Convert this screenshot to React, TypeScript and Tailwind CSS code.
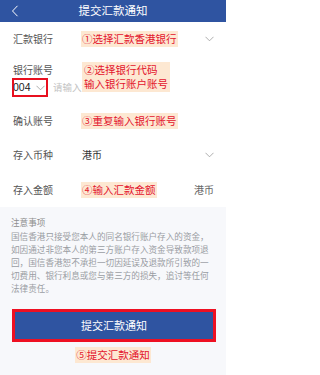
import React from 'react';

const font = { fontFamily: '"Noto Sans CJK SC", "Noto Sans", sans-serif' };

const Chevron = () => (
  <svg width="9" height="6" viewBox="0 0 9 6" className="shrink-0">
    <path d="M0.5 0.8 L4.5 4.8 L8.5 0.8" fill="none" stroke="#9a9a9a" strokeWidth="0.8" />
  </svg>
);

const Note: React.FC<{ children: React.ReactNode; className?: string }> = ({ children, className = '' }) => (
  <span className={`bg-[#fde8d2] text-[#e3132c] text-[10.5px] leading-[14px] px-[1px] py-[1px] ${className}`}>{children}</span>
);

export default function App() {
  return (
    <div className="w-[226px] h-[375px] bg-white flex flex-col overflow-hidden" style={font}>
      {/* Header */}
      <div className="h-[22px] bg-[#2f54a1] flex items-center relative shrink-0">
        <svg width="8" height="12" viewBox="0 0 8 12" className="absolute left-[11px] top-[5px]">
          <path d="M6.5 0.8 L1.5 6 L6.5 11.2" fill="none" stroke="#fff" strokeWidth="1" />
        </svg>
        <div className="w-full text-center text-white text-[11.5px] leading-none">提交汇款通知</div>
      </div>

      {/* Form */}
      <div className="flex flex-col">
        <div className="h-[33px] flex items-center pl-[13px] pr-[12px]">
          <span className="w-[68px] text-[10px] text-[#555]">汇款银行</span>
          <Note>①选择汇款香港银行</Note>
          <span className="ml-auto"><Chevron /></span>
        </div>

        <div className="h-[49px] relative flex flex-col pl-[12px] pt-[8px]">
          <span className="pl-[1px] text-[10px] leading-[14px] text-[#555]">银行账号</span>
          <div className="flex items-center mt-[1px]">
            <div className="w-[36px] h-[19px] border-2 border-[#e8101f] flex items-center gap-[5px]">
              <span className="text-[10.5px] text-[#222] leading-none -ml-[1px]" style={{ fontFamily: '"Liberation Sans", sans-serif' }}>004</span>
              <Chevron />
            </div>
            <span className="ml-[5px] w-[29px] overflow-hidden whitespace-nowrap text-[9.5px] text-[#c4c4c4]">请输入银行账号</span>
          </div>
          {/* annotation laid over the placeholder */}
          <div className="absolute left-[82px] top-[7px] bg-[#fde8d2] flex flex-col px-[2px] py-[1px]">
            <span className="text-[#e3132c] text-[10.5px] leading-[14px]">②选择银行代码</span>
            <span className="text-[#e3132c] text-[10.5px] leading-[14px]">输入银行账户账号</span>
          </div>
        </div>

        <div className="h-[33px] flex items-center pl-[13px] pr-[12px]">
          <span className="w-[68px] text-[10px] text-[#555]">确认账号</span>
          <Note>③重复输入银行账号</Note>
        </div>

        <div className="h-[35px] flex items-center pl-[13px] pr-[12px]">
          <span className="w-[69px] text-[10px] text-[#555]">存入币种</span>
          <span className="text-[10px] text-[#333]">港币</span>
          <span className="ml-auto"><Chevron /></span>
        </div>

        <div className="h-[35px] flex items-center pl-[13px] pr-[12px]">
          <span className="w-[68px] text-[10px] text-[#555]">存入金额</span>
          <Note>④输入汇款金额</Note>
          <span className="ml-auto text-[10px] text-[#666]">港币</span>
        </div>
      </div>

      {/* Notice + submit */}
      <div className="flex-1 bg-[#f7f8fb] flex flex-col px-[11px] pt-[9px]">
        <span className="text-[8.6px] leading-[13px] text-[#8e8e8e]">注意事项</span>
        <div className="flex flex-col text-[8.6px] leading-[13px] text-[#9a9da3] mt-[1px]">
          <span>国信香港只接受您本人的同名银行账户存入的资金，</span>
          <span>如因通过非您本人的第三方账户存入资金导致款项退</span>
          <span>回，国信香港恕不承担一切因延误及退款所引致的一</span>
          <span>切费用、银行利息或您与第三方的损失，追讨等任何</span>
          <span>法律责任。</span>
        </div>

        <div className="mt-[14px] ml-[1px] w-[204px] h-[33px] border-[3px] border-[#ee1022] bg-[#2f54a1] flex items-center justify-center">
          <span className="text-white text-[11px]">提交汇款通知</span>
        </div>

        <div className="flex justify-center mt-[5px]">
          <Note>⑤提交汇款通知</Note>
        </div>
      </div>
    </div>
  );
}
